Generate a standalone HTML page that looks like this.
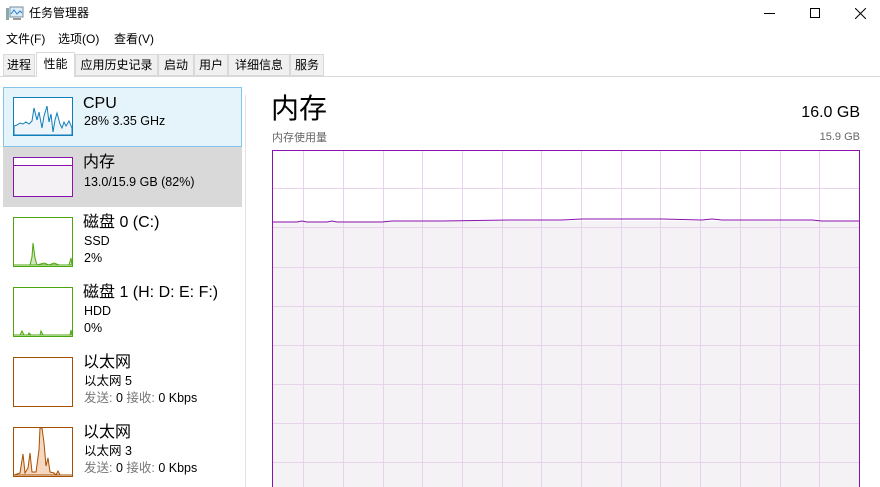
<!DOCTYPE html>
<html><head><meta charset="utf-8"><style>
*{margin:0;padding:0;box-sizing:border-box}
body{width:880px;height:487px;overflow:hidden;background:#fff;font-family:"Liberation Sans","Noto Sans CJK SC",sans-serif;color:#000;position:relative}
.a{position:absolute;white-space:nowrap;line-height:1.2}
.tab{position:absolute;top:54px;height:22px;background:#f0f0f0;border:1px solid #d9d9d9;font-size:12px;line-height:20px;text-align:center}
.t1{font-size:16px;line-height:18px}
.t2{font-size:12.5px;line-height:15px}
.g{color:#777}
.th{position:absolute;left:13px;width:60px;background:#fff}
</style></head><body>
<svg class="a" style="left:6px;top:6px" width="18" height="16" viewBox="0 0 18 16"><rect x="0" y="2" width="3" height="12" fill="#8aa"/><rect x="4" y="1" width="13" height="10" fill="#dbeef8" stroke="#7a8a99"/><path d="M5 8l3-4 3 4 3-3 2 2" stroke="#2b7bd3" fill="none"/><rect x="7" y="12" width="8" height="2" fill="#999"/></svg>
<div class="a" style="left:29px;top:6px;font-size:12px">任务管理器</div>
<div class="a" style="left:764px;top:13px;width:11px;height:1px;background:#000"></div>
<div class="a" style="left:810px;top:8px;width:10px;height:10px;border:1px solid #000"></div>
<svg class="a" style="left:855px;top:8px" width="11" height="11"><path d="M0 0L11 11M11 0L0 11" stroke="#000" stroke-width="1"/></svg>
<div class="a" style="left:6px;top:32px;font-size:12px">文件(F)</div>
<div class="a" style="left:58px;top:32px;font-size:12px">选项(O)</div>
<div class="a" style="left:114px;top:32px;font-size:12px">查看(V)</div>
<div class="a" style="left:0;top:76px;width:880px;height:1px;background:#d9d9d9"></div>
<div class="tab" style="left:3px;width:32px">进程</div>
<div class="tab" style="left:36px;width:39px;top:52px;height:25px;background:#fff;border-bottom:none;line-height:22px">性能</div>
<div class="tab" style="left:75px;width:83px">应用历史记录</div>
<div class="tab" style="left:158px;width:36px">启动</div>
<div class="tab" style="left:194px;width:34px">用户</div>
<div class="tab" style="left:228px;width:62px">详细信息</div>
<div class="tab" style="left:290px;width:34px">服务</div>

<div class="a" style="left:245px;top:95px;width:1px;height:392px;background:#e3e3e3"></div>
<div class="a" style="left:3px;top:87px;width:239px;height:60px;background:#e5f3fb;border:1px solid #84c3ea"></div>
<div class="a" style="left:3px;top:147px;width:239px;height:60px;background:#d9d9d9"></div>

<div class="th" style="top:97px;height:39px;border:1px solid #117dbb"><svg width="58" height="37" style="display:block"><path d="M0 28L3 27L6 25L9 26L12 24L15 26L18 23L20 10L23 22L25 14L28 30L30 18L33 8L35 24L37 16L39 34L41 22L43 15L46 26L48 30L50 24L52 28L55 23L58 30L58 37L0 37Z" fill="#eef5fa" stroke="#117dbb"/></svg></div>
<div class="a t1" style="left:83px;top:95px">CPU</div>
<div class="a t2" style="left:84px;top:114px">28% 3.35 GHz</div>

<div class="th" style="top:157px;height:40px;border:1px solid #8b12ae"><div style="position:absolute;left:0;right:0;top:7px;bottom:0;background:#f4f2f4;border-top:1px solid #8b12ae"></div></div>
<div class="a t1" style="left:83px;top:154px">内存</div>
<div class="a t2" style="left:84px;top:175px">13.0/15.9 GB (82%)</div>

<div class="th" style="top:217px;height:50px;border:1px solid #4da60c"><svg width="58" height="48" style="display:block"><path d="M0 47L16 47L18 39L19 25L21 40L23 47L30 45L35 47L40 45L45 47L55 47L57 40L58 47Z" fill="#cfe8bf" stroke="#4da60c"/></svg></div>
<div class="a t1" style="left:83px;top:214px">磁盘 0 (C:)</div>
<div class="a t2" style="left:84px;top:234px">SSD</div>
<div class="a t2" style="left:84px;top:251px">2%</div>

<div class="th" style="top:287px;height:50px;border:1px solid #4da60c"><svg width="58" height="48" style="display:block"><path d="M0 47L6 47L8 43L10 47L14 47L15 45L17 47L26 47L27 43L29 47L56 47L57 42L58 47Z" fill="#cfe8bf" stroke="#4da60c"/></svg></div>
<div class="a t1" style="left:83px;top:284px">磁盘 1 (H: D: E: F:)</div>
<div class="a t2" style="left:84px;top:304px">HDD</div>
<div class="a t2" style="left:84px;top:321px">0%</div>

<div class="th" style="top:357px;height:50px;border:1px solid #a74f01"></div>
<div class="a t1" style="left:83px;top:354px">以太网</div>
<div class="a t2" style="left:84px;top:374px">以太网 5</div>
<div class="a t2" style="left:84px;top:391px"><span class="g">发送:</span> 0 <span class="g">接收:</span> 0 Kbps</div>

<div class="th" style="top:427px;height:50px;border:1px solid #a74f01"><svg width="58" height="48" style="display:block"><path d="M0 47L6 45L9 26L11 45L14 40L16 25L18 44L22 44L25 22L26 0L28 0L30 15L32 38L34 30L36 44L40 45L42 47L44 43L46 47L58 47Z" fill="#f6d7c0" stroke="#a74f01"/></svg></div>
<div class="a t1" style="left:83px;top:424px">以太网</div>
<div class="a t2" style="left:84px;top:444px">以太网 3</div>
<div class="a t2" style="left:84px;top:461px"><span class="g">发送:</span> 0 <span class="g">接收:</span> 0 Kbps</div>

<div class="a" style="left:271px;top:92px;font-size:28px;line-height:34px">内存</div>
<div class="a" style="right:20px;top:103px;font-size:16px">16.0 GB</div>
<div class="a g" style="left:272px;top:132px;font-size:11px;color:#666">内存使用量</div>
<div class="a g" style="right:20px;top:131px;font-size:11px;color:#666">15.9 GB</div>

<svg class="a" style="left:272px;top:150px" width="588" height="337">
<rect x="0" y="71" width="588" height="266" fill="#f4f2f4"/>
<g stroke="#e7d3ec" stroke-width="1">
<path d="M31.5 0V337M71.5 0V337M111.5 0V337M150.5 0V337M190.5 0V337M230.5 0V337M269.5 0V337M309.5 0V337M349.5 0V337M388.5 0V337M428.5 0V337M468.5 0V337M508.5 0V337M547.5 0V337"/>
<path d="M0 38.5H588M0 77.5H588M0 117.5H588M0 156.5H588M0 195.5H588M0 234.5H588M0 273.5H588M0 312.5H588"/>
</g>
<path d="M0 72L25 72L30 71L35 72L55 72L60 71L65 72L110 72L120 71L170 71L240 70L290 70L310 69L340 69L390 69L430 70L440 69L450 70L540 70L550 71L588 71" fill="none" stroke="#8b12ae" stroke-width="1"/>
<rect x="0.5" y="0.5" width="587" height="340" fill="none" stroke="#8b12ae"/>
</svg>
</body></html>
